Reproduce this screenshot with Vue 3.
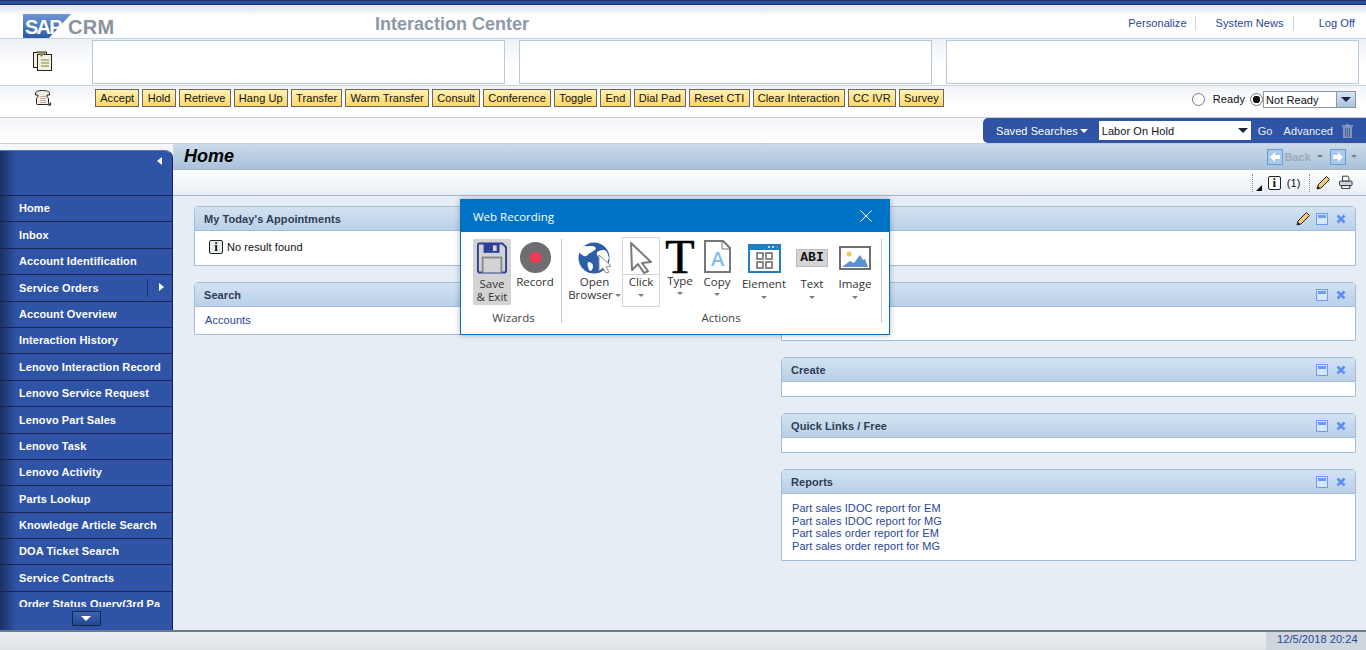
<script setup>
const actions = ['Accept', 'Hold', 'Retrieve', 'Hang Up', 'Transfer', 'Warm Transfer', 'Consult', 'Conference', 'Toggle', 'End', 'Dial Pad', 'Reset CTI', 'Clear Interaction', 'CC IVR', 'Survey']

const navItems = ['Home', 'Inbox', 'Account Identification', 'Service Orders', 'Account Overview', 'Interaction History', 'Lenovo Interaction Record', 'Lenovo Service Request', 'Lenovo Part Sales', 'Lenovo Task', 'Lenovo Activity', 'Parts Lookup', 'Knowledge Article Search', 'DOA Ticket Search', 'Service Contracts', 'Order Status Query(3rd Pa']

const reports = ['Part sales IDOC report for EM', 'Part sales IDOC report for MG', 'Part sales order report for EM', 'Part sales order report for MG']
</script>

<template>
  <div class="page">
    <div class="top-stripe"></div>

    <header class="brand-row">
      <div class="logo">
        <svg class="logo-flag" width="48" height="24" viewBox="0 0 48 24">
          <defs>
            <linearGradient id="sapBlue" x1="0" y1="0" x2="0" y2="1">
              <stop offset="0" stop-color="#6f97d6" />
              <stop offset="1" stop-color="#2a5aa8" />
            </linearGradient>
          </defs>
          <polygon points="0,0 48,0 26,24 0,24" fill="url(#sapBlue)" />
        </svg>
        <span class="logo-sap">SAP</span>
        <span class="logo-crm">CRM</span>
      </div>
      <div class="app-title">Interaction Center</div>
      <nav class="top-links">
        <a>Personalize</a>
        <a>System News</a>
        <a>Log Off</a>
      </nav>
    </header>

    <section class="info-row">
      <div class="info-icon">
        <svg width="20" height="20" viewBox="0 0 20 20">
          <rect x="0.500" y="1.500" width="13" height="15" fill="#f2f1df" stroke="#222" />
          <rect x="4.500" y="3.500" width="14" height="16" fill="#f2f1df" stroke="#222" />
          <polygon points="3,0 14,0 8.500,6" fill="#8d8a5c" />
          <path d="M8 9h8M8 12h8M8 15h8" stroke="#a9a77c" stroke-width="1.400" />
        </svg>
      </div>
      <div class="info-boxes">
        <div class="info-box"></div>
        <div class="info-box"></div>
        <div class="info-box"></div>
      </div>
    </section>

    <section class="cti-row">
      <div class="cti-phone">
        <svg width="17" height="16" viewBox="0 0 17 16">
          <path d="M0.500 5V3c0-1.500 3-2.500 7-2.500s7 1 7 2.500v2h-2.500v1.500l1.500 2v5a1 1 0 0 1-1 1h-10a1 1 0 0 1-1-1v-5l1.500-2V5z" fill="#efece2" stroke="#222" />
          <path d="M5.500 6.500h5M5.500 8.500h5M5.500 10.500h5M5.500 12.500h5" stroke="#b56a6a" stroke-dasharray="1 1" />
          <path d="M12.500 15.500l3.500-3.500v3.500z" fill="#222" />
        </svg>
      </div>
      <div class="cti-buttons">
        <button v-for="a in actions" :key="a" class="cti-btn">{{ a }}</button>
      </div>
      <div class="ready-group">
        <span class="radio"></span>
        <span class="ready-label">Ready</span>
        <span class="radio on"></span>
        <div class="ready-select">
          <span class="ready-value">Not Ready</span>
          <span class="ready-arrow"><i class="caret dark"></i></span>
        </div>
      </div>
    </section>

    <section class="search-row">
      <div class="saved-bar">
        <span class="saved-label">Saved Searches</span>
        <i class="caret white small"></i>
        <div class="saved-input">Labor On Hold<i class="caret dark"></i></div>
        <span class="saved-link go">Go</span>
        <span class="saved-link">Advanced</span>
        <svg class="trash" width="11" height="14" viewBox="0 0 11 14">
          <path d="M0 2h11M4 1h3" stroke="#8fa3c6" stroke-width="1.500" />
          <path d="M1 3h9v11H1z" fill="#8093b8" />
          <path d="M3.500 4v9M5.500 4v9M7.500 4v9" stroke="#4a639c" />
        </svg>
      </div>
    </section>

    <div class="main">
      <aside class="sidebar">
        <div class="side-top"><i class="tri-left"></i></div>
        <ul class="side-list">
          <li v-for="item in navItems" :key="item" class="side-item">
            <span>{{ item }}</span>
            <template v-if="item === 'Service Orders'">
              <em class="side-sep"></em>
              <i class="tri-right"></i>
            </template>
          </li>
        </ul>
        <div class="side-bottom">
          <div class="scroll-btn"><i class="caret white"></i></div>
        </div>
      </aside>

      <main class="work">
        <div class="title-bar">
          <h1>Home</h1>
          <div class="history">
            <span class="hist-icon">
              <svg width="14" height="14" viewBox="0 0 14 14"><path d="M2 7l5-5v3h5v4H7v3z" fill="#fff" /></svg>
            </span>
            <span class="back-text">Back</span>
            <i class="caret grey tiny back-caret"></i>
            <span class="hist-icon fwd">
              <svg width="14" height="14" viewBox="0 0 14 14"><path d="M12 7L7 2v3H2v4h5v3z" fill="#fff" /></svg>
            </span>
            <i class="caret grey tiny"></i>
          </div>
        </div>

        <div class="tool-bar">
          <span class="dots"></span>
          <i class="corner-tri"></i>
          <span class="info-glyph">i</span>
          <span class="count">(1)</span>
          <span class="dots second"></span>
          <svg class="pencil" width="15" height="15" viewBox="0 0 15 15">
            <path d="M1 14l1-4 8.500-8.500 3 3L5 13z" fill="#f4c77b" stroke="#222" />
            <path d="M1 14l1-3 2 2z" fill="#222" />
          </svg>
          <svg class="printer" width="15" height="15" viewBox="0 0 15 15">
            <path d="M4 0.500h6l1 2v3.500H4z" fill="#fff" stroke="#222" />
            <rect x="0.500" y="6" width="14" height="5" rx="1" fill="#c8d3de" stroke="#222" />
            <rect x="3" y="11" width="9" height="3" fill="#fff" stroke="#222" />
          </svg>
        </div>

        <div class="content">
          <div class="col">
            <div class="panel appt">
              <div class="panel-head">My Today's Appointments</div>
              <div class="panel-body no-result">
                <span class="info-glyph pale">i</span>
                <span>No result found</span>
              </div>
            </div>
            <div class="panel search">
              <div class="panel-head">Search</div>
              <div class="panel-body"><a class="link">Accounts</a></div>
            </div>
          </div>

          <div class="col">
            <div class="panel r-first">
              <div class="panel-head">
                <span></span>
                <div class="head-icons">
                  <svg class="pencil" width="15" height="15" viewBox="0 0 15 15">
                    <path d="M1 14l1-4 8.500-8.500 3 3L5 13z" fill="#f4c77b" stroke="#222" />
                    <path d="M1 14l1-3 2 2z" fill="#222" />
                  </svg>
                  <span class="min-btn"></span>
                  <svg class="close-btn" width="10" height="10" viewBox="0 0 10 10"><path d="M1.500 1.500l7 7M8.500 1.500l-7 7" stroke="#5f8ff0" stroke-width="2.600" /></svg>
                </div>
              </div>
              <div class="panel-body"></div>
            </div>
            <div class="panel r-second">
              <div class="panel-head">
                <span></span>
                <div class="head-icons">
                  <span class="min-btn"></span>
                  <svg class="close-btn" width="10" height="10" viewBox="0 0 10 10"><path d="M1.500 1.500l7 7M8.500 1.500l-7 7" stroke="#5f8ff0" stroke-width="2.600" /></svg>
                </div>
              </div>
              <div class="panel-body"></div>
            </div>
            <div class="panel r-small">
              <div class="panel-head">
                <span>Create</span>
                <div class="head-icons">
                  <span class="min-btn"></span>
                  <svg class="close-btn" width="10" height="10" viewBox="0 0 10 10"><path d="M1.500 1.500l7 7M8.500 1.500l-7 7" stroke="#5f8ff0" stroke-width="2.600" /></svg>
                </div>
              </div>
              <div class="panel-body"></div>
            </div>
            <div class="panel r-small">
              <div class="panel-head">
                <span>Quick Links / Free</span>
                <div class="head-icons">
                  <span class="min-btn"></span>
                  <svg class="close-btn" width="10" height="10" viewBox="0 0 10 10"><path d="M1.500 1.500l7 7M8.500 1.500l-7 7" stroke="#5f8ff0" stroke-width="2.600" /></svg>
                </div>
              </div>
              <div class="panel-body"></div>
            </div>
            <div class="panel r-reports">
              <div class="panel-head">
                <span>Reports</span>
                <div class="head-icons">
                  <span class="min-btn"></span>
                  <svg class="close-btn" width="10" height="10" viewBox="0 0 10 10"><path d="M1.500 1.500l7 7M8.500 1.500l-7 7" stroke="#5f8ff0" stroke-width="2.600" /></svg>
                </div>
              </div>
              <div class="panel-body report-list">
                <a v-for="r in reports" :key="r" class="link">{{ r }}</a>
              </div>
            </div>
          </div>
        </div>
      </main>
    </div>

    <footer class="status-bar">
      <div class="status-time">12/5/2018 20:24</div>
    </footer>

    <div class="recorder">
      <div class="rec-head">
        <span>Web Recording</span>
        <svg width="12" height="12" viewBox="0 0 12 12"><path d="M0.500 0.500l11 11M11.500 0.500l-11 11" stroke="#fff" /></svg>
      </div>
      <div class="rec-body">
        <div class="rec-group wizards">
          <div class="rec-items">
            <div class="rec-item save">
              <svg width="30" height="32" viewBox="0 0 32 33">
                <path d="M2 1h25l4 4v25a2 2 0 0 1-2 2H3a2 2 0 0 1-2-2V2z" fill="#d3d3d3" stroke="#2e3f94" stroke-width="2" />
                <path d="M7 1h17v10H7z" fill="#2e3f94" />
                <rect x="17" y="3" width="4" height="6" fill="#d3d3d3" />
                <path d="M6 32V16h20v16" fill="#d3d3d3" stroke="#8b8b8b" stroke-width="2" />
              </svg>
              <span class="rec-label">Save<br />&amp; Exit</span>
            </div>
            <div class="rec-item record">
              <svg width="33" height="33" viewBox="0 0 34 34">
                <circle cx="17" cy="17" r="16" fill="#6d6e71" />
                <circle cx="17" cy="17" r="6" fill="#ee3b55" />
              </svg>
              <span class="rec-label">Record</span>
            </div>
          </div>
          <div class="group-name">Wizards</div>
        </div>

        <div class="rec-group actions">
          <div class="rec-items">
            <div class="rec-item open">
              <svg width="36" height="34" viewBox="0 0 36 34">
                <circle cx="17" cy="17" r="15.500" fill="#2b5ea7" />
                <path d="M8 5c4 1 7-1 10 1s-3 5-5 6-3 4-6 3-4-3-5-4c1-3 3-5 6-6zM20 11c3-2 8-3 10 0l2 6c-2 3-1 8-5 10-2-3-1-6-3-8s-5-5-4-8zM11 21c3 0 5 2 5 4s-1 5-3 5c-2-2-3-6-2-9z" fill="#fff" />
                <path d="M22 14l12 11-5 1 3 5-3 1-3-5-4 3z" fill="#fff" stroke="#8a8a8a" />
              </svg>
              <span class="rec-label">Open<br />Browser<i class="caret grey tiny inline"></i></span>
            </div>
            <div class="rec-item click">
              <div class="click-top">
                <svg width="26" height="33" viewBox="0 0 26 33">
                  <path d="M3 2l20 19-9 1 6 8-4 2-6-9-6 6z" fill="#fff" stroke="#7a7a7a" stroke-width="2" stroke-linejoin="round" />
                </svg>
              </div>
              <span class="rec-label">Click</span>
              <i class="caret grey tiny"></i>
            </div>
            <div class="rec-item type">
              <span class="big-t">T</span>
              <span class="rec-label">Type</span>
              <i class="caret grey tiny"></i>
            </div>
            <div class="rec-item copy">
              <svg width="28" height="33" viewBox="0 0 28 33">
                <path d="M2 1h18l7 7v24H2z" fill="#fff" stroke="#777" stroke-width="2" />
                <path d="M19 1v8h8" fill="none" stroke="#777" />
                <text x="14.500" y="26" text-anchor="middle" class="copy-a">A</text>
              </svg>
              <span class="rec-label">Copy</span>
              <i class="caret grey tiny"></i>
            </div>
            <div class="rec-item element">
              <svg width="33" height="30" viewBox="0 0 33 30">
                <rect x="1" y="1" width="31" height="27" fill="#fff" stroke="#1f7fc0" stroke-width="2" />
                <rect x="0" y="0" width="33" height="6" fill="#1f7fc0" />
                <circle cx="21" cy="3" r="1" fill="#fff" /><circle cx="25" cy="3" r="1" fill="#fff" /><circle cx="29" cy="3" r="1" fill="#ee5566" />
                <path d="M9 9h6v6H9zM18 9h6v6h-6zM9 18h6v6H9zM18 18h6v6h-6z" fill="#fff" stroke="#666" stroke-width="1.500" />
              </svg>
              <span class="rec-label">Element</span>
              <i class="caret grey tiny"></i>
            </div>
            <div class="rec-item text">
              <div class="abi">ABI</div>
              <span class="rec-label">Text</span>
              <i class="caret grey tiny"></i>
            </div>
            <div class="rec-item image">
              <svg width="32" height="24" viewBox="0 0 32 24">
                <rect x="1" y="1" width="30" height="22" fill="#fff" stroke="#6f6f6f" stroke-width="2" />
                <circle cx="10" cy="8" r="2.500" fill="#f2c94c" />
                <path d="M3 21l8-6 4 2 6-8 3 5 2-1 3 8z" fill="#5f8fcf" />
              </svg>
              <span class="rec-label">Image</span>
              <i class="caret grey tiny"></i>
            </div>
          </div>
          <div class="group-name">Actions</div>
        </div>
      </div>
    </div>
  </div>
</template>

<style>
html, body {
  margin: 0;
  overflow: hidden;
}
</style>

<style scoped>
.page {
  position: relative;
  width: 1366px;
  height: 650px;
  overflow: hidden;
  display: flex;
  flex-direction: column;
  font-family: "Liberation Sans", Arial, sans-serif;
  font-size: 11px;
  letter-spacing: 0.07px;
  color: #111;
  background: #f4f6fa;
}

.top-stripe {
  height: 5px;
  flex: none;
  box-sizing: border-box;
  background: #2c50a0;
  border-top: 1px solid #1c2f66;
  border-bottom: 1px solid #1c2f66;
}

/* header */
.brand-row {
  height: 34px;
  flex: none;
  position: relative;
  display: flex;
  align-items: center;
  box-sizing: border-box;
  padding-top: 6px;
  border-bottom: 1px solid #c9d3de;
  background: linear-gradient(#dde3ec, #ffffff 35%);
}
.logo {
  position: absolute;
  left: 23px;
  top: 9px;
  width: 95px;
  height: 24px;
}
.logo-flag {
  display: block;
}
.logo-sap {
  position: absolute;
  left: 2px;
  top: 3px;
  font-size: 20px;
  line-height: 20px;
  font-weight: bold;
  letter-spacing: -1.800px;
  color: #fff;
}
.logo-crm {
  position: absolute;
  left: 45px;
  top: 3px;
  font-size: 20px;
  line-height: 20px;
  font-weight: bold;
  letter-spacing: 0.300px;
  color: #8a929c;
}
.app-title {
  margin-left: 375px;
  font-size: 18px;
  letter-spacing: 0;
  font-weight: bold;
  color: #8d99a8;
}
.top-links {
  margin-left: auto;
  display: flex;
  padding-right: 11px;
  margin-bottom: 4px;
}
.top-links a {
  color: #274698;
  padding: 1px 9px 1px 20px;
  border-right: 1px solid #cfd6de;
}
.top-links a:first-child {
  padding-left: 0;
  padding-right: 8px;
}
.top-links a:last-child {
  border-right: 0;
  padding-left: 25px;
  padding-right: 0;
}

.info-row {
  height: 47px;
  flex: none;
  display: flex;
  box-sizing: border-box;
  padding: 1px 7px 1px 0;
  border-bottom: 1px solid #c9d3de;
  background: linear-gradient(#eef1f6, #ffffff 60%);
}
.info-icon {
  width: 92px;
  padding: 11px 0 0 33px;
  box-sizing: border-box;
}
.info-boxes {
  flex: 1;
  display: grid;
  grid-template-columns: repeat(3, 1fr);
  column-gap: 14px;
}
.info-box {
  background: #fff;
  border: 1px solid #b4cbe0;
}

.cti-row {
  height: 32px;
  flex: none;
  display: flex;
  box-sizing: border-box;
  padding: 3px 10px 0 0;
  border-bottom: 1px solid #c9ced6;
  background: linear-gradient(#f0f3f8, #ffffff 60%);
}
.cti-phone {
  width: 95px;
  padding: 1px 0 0 35px;
  box-sizing: border-box;
}
.cti-buttons {
  display: flex;
  gap: 3px;
  height: 18px;
}
.cti-btn {
  padding: 0 4.200px;
  height: 18px;
  border: 1px solid #666;
  background: linear-gradient(#fff2b0, #fdd66a);
  font-family: inherit;
  font-size: 11px;
  letter-spacing: inherit;
  color: #111;
}
.ready-group {
  margin-left: auto;
  display: flex;
  align-items: center;
  height: 18px;
  margin-top: 1px;
}
.radio {
  width: 13px;
  height: 13px;
  box-sizing: border-box;
  border: 1px solid #777;
  border-radius: 50%;
  background: #fff;
}
.radio.on {
  background: radial-gradient(circle, #111 0 3.500px, #fff 4px);
}
.ready-label {
  margin: 0 5px 0 8px;
}
.ready-select {
  display: flex;
  height: 17px;
  width: 93px;
  box-sizing: border-box;
  border: 1px solid #8a97a8;
  background: #fff;
}
.ready-value {
  flex: 1;
  padding-left: 2px;
  line-height: 16px;
}
.ready-arrow {
  width: 18px;
  display: flex;
  align-items: center;
  justify-content: center;
  background: linear-gradient(#d8e4f0, #a9c2dc);
  border-left: 1px solid #8a97a8;
}

.caret {
  display: inline-block;
  width: 0;
  height: 0;
  border-left: 5px solid transparent;
  border-right: 5px solid transparent;
  border-top: 5px solid #111;
}
.caret.small {
  border-left-width: 4px;
  border-right-width: 4px;
  border-top-width: 4px;
}
.caret.tiny {
  border-left-width: 3.500px;
  border-right-width: 3.500px;
  border-top-width: 3.500px;
}
.caret.white {
  border-top-color: #fff;
}
.caret.grey {
  border-top-color: #7a7f87;
}
.caret.dark {
  border-top-color: #17233f;
}
.caret.inline {
  margin-left: 2px;
  vertical-align: 2px;
}

.search-row {
  height: 26px;
  flex: none;
  display: flex;
  justify-content: flex-end;
  box-sizing: border-box;
  border-bottom: 1px solid #c9ced6;
  background: linear-gradient(#f3f5f9, #ffffff);
}
.saved-bar {
  width: 383px;
  box-sizing: border-box;
  padding-left: 13px;
  display: flex;
  align-items: center;
  background: #2f54a5;
  border-radius: 5px 0 0 5px;
  color: #fff;
}
.saved-label {
  margin-right: 2px;
}
.saved-input {
  width: 152px;
  height: 19px;
  box-sizing: border-box;
  margin-left: 11px;
  padding: 0 3px;
  display: flex;
  align-items: center;
  justify-content: space-between;
  background: #fff;
  color: #111;
}
.saved-link {
  color: #e8eef8;
  margin-left: 11px;
}
.saved-link.go {
  margin-left: 7px;
}
.trash {
  margin-left: 9px;
}

/* main area */
.main {
  flex: 1;
  min-height: 0;
  display: flex;
}
.sidebar {
  width: 173px;
  flex: none;
  margin-top: 6px;
  box-sizing: border-box;
  display: flex;
  flex-direction: column;
  border-right: 1px solid #16264f;
  border-top: 1px solid #5a78bc;
  border-radius: 0 8px 0 0;
  color: #fff;
  background: linear-gradient(90deg, #1c2f66, #2f54a5 16px);
}
.side-top {
  height: 44px;
  flex: none;
  position: relative;
}
.tri-left {
  position: absolute;
  left: 157px;
  top: 6px;
  border-top: 4px solid transparent;
  border-bottom: 4px solid transparent;
  border-right: 5px solid #fff;
}
.side-list {
  margin: 0;
  padding: 0;
  list-style: none;
  height: 412px;
  flex: none;
  overflow: hidden;
}
.side-item {
  height: 26.400px;
  box-sizing: border-box;
  padding: 6.400px 0 0 19px;
  display: flex;
  position: relative;
  border-top: 1px solid #16264f;
  font-weight: bold;
  white-space: nowrap;
  letter-spacing: 0.100px;
}
.side-sep {
  position: absolute;
  left: 147px;
  top: 4px;
  height: 18px;
  border-left: 1px solid #1c3372;
}
.tri-right {
  position: absolute;
  left: 159px;
  top: 8px;
  border-top: 4px solid transparent;
  border-bottom: 4px solid transparent;
  border-left: 5px solid #fff;
}
.side-bottom {
  flex: 1;
  display: flex;
  justify-content: center;
  padding-top: 4px;
}
.scroll-btn {
  width: 29px;
  height: 15px;
  box-sizing: border-box;
  display: flex;
  align-items: center;
  justify-content: center;
  background: linear-gradient(#3f64b4, #24468f);
  border: 1px solid #16264f;
}

.work {
  flex: 1;
  min-width: 0;
  display: flex;
  flex-direction: column;
  background: #e6edf5;
}
.title-bar {
  height: 26px;
  flex: none;
  display: flex;
  justify-content: space-between;
  box-sizing: border-box;
  padding: 0 9px 0 11px;
  background: linear-gradient(#cbdbea, #a9c2d9);
  border-bottom: 1px solid #a5b5c8;
}
.title-bar h1 {
  margin: 0;
  font-size: 18px;
  line-height: 24px;
  letter-spacing: 0;
  font-weight: bold;
  font-style: italic;
  color: #000;
}
.history {
  display: flex;
  align-items: center;
}
.hist-icon {
  width: 14px;
  height: 14px;
  box-sizing: border-box;
  display: flex;
  background: #a8c8ec;
  outline: 1px solid #6d9bd8;
}
.hist-icon.fwd {
  margin: 0 6px 0 8px;
}
.back-text {
  margin-left: 2px;
  font-weight: bold;
  color: #9fa9b5;
}
.back-caret {
  margin-left: 6px;
}
.tool-bar {
  height: 26px;
  flex: none;
  display: flex;
  align-items: center;
  box-sizing: border-box;
  padding: 0 13px 0 1079px;
  background: linear-gradient(#ffffff, #e8eef5);
  border-bottom: 1px solid #a5b5c8;
}
.dots {
  width: 0;
  height: 18px;
  border-left: 1px dotted #8a8f98;
}
.dots.second {
  margin-left: 9px;
}
.corner-tri {
  width: 0;
  height: 0;
  margin: 10px 0 0 3px;
  border-left: 6px solid transparent;
  border-bottom: 6px solid #111;
}
.info-glyph {
  width: 14px;
  height: 14px;
  box-sizing: border-box;
  margin-left: 6px;
  display: inline-flex;
  align-items: center;
  justify-content: center;
  border: 1px solid #222;
  border-radius: 2px;
  background: #fff;
  font-family: "Liberation Serif", serif;
  font-size: 13px;
  font-weight: bold;
  color: #111;
}
.info-glyph.pale {
  margin-left: 0;
  background: #e6f0ea;
}
.count {
  margin-left: 6px;
}
.pencil {
  flex: none;
}
.tool-bar .pencil {
  margin-left: 6px;
}
.head-icons .pencil {
  margin-right: -2px;
}
.printer {
  margin-left: 8px;
}

.content {
  flex: 1;
  display: grid;
  grid-template-columns: 573px 575px;
  column-gap: 14px;
  padding: 10px 0 0 21px;
  align-content: start;
}
.col {
  display: flex;
  flex-direction: column;
}
.panel {
  display: flex;
  flex-direction: column;
  box-sizing: border-box;
  border: 1px solid #a3bdd9;
  border-radius: 4px 4px 0 0;
  background: #fff;
  margin-bottom: 16px;
}
.panel-head {
  height: 24px;
  flex: none;
  display: flex;
  align-items: center;
  justify-content: space-between;
  box-sizing: border-box;
  padding: 0 9px;
  background: linear-gradient(#d2e2f2, #bad1e8);
  border-bottom: 1px solid #a3bdd9;
  font-weight: bold;
  color: #2d3d55;
}
.panel-body {
  flex: 1;
}
.appt, .r-first {
  height: 60px;
}
.search {
  height: 53px;
}
.r-second {
  height: 59px;
}
.r-small {
  height: 40px;
}
.r-reports {
  height: 92px;
}
.no-result {
  padding: 9px 14px;
  display: flex;
  gap: 4px;
  align-items: center;
  align-self: stretch;
  flex: none;
}
.search .panel-body {
  padding: 7px 10px;
}
.link {
  color: #274698;
}
.report-list {
  display: flex;
  flex-direction: column;
  padding: 8px 10px;
  line-height: 12.700px;
}
.head-icons {
  display: flex;
  align-items: center;
  gap: 7px;
}
.min-btn {
  width: 12px;
  height: 12px;
  box-sizing: border-box;
  border: 1px solid #6a9bff;
  background: linear-gradient(#6a9bff, #6a9bff) no-repeat 1px 1px / 8px 3px #d8e6f6;
}
.close-btn {
  flex: none;
  margin-left: 1px;
}

.status-bar {
  height: 20px;
  flex: none;
  display: flex;
  justify-content: flex-end;
  box-sizing: border-box;
  border-top: 2px solid #6a7a92;
  background: linear-gradient(#eceef0, #dfe3e6);
}
.status-time {
  width: 100px;
  box-sizing: border-box;
  padding: 1px 0 0 11px;
  background: #ced5dc;
  font-size: 11px;
  color: #274698;
}

/* recorder window */
.recorder {
  position: absolute;
  left: 460px;
  top: 199px;
  width: 430px;
  height: 136px;
  box-sizing: border-box;
  display: flex;
  flex-direction: column;
  border: 1px solid #0072c6;
  background: #fff;
  box-shadow: 0 0 6px rgba(0, 0, 0, 0.28);
  font-family: "Open Sans", "Noto Sans", sans-serif;
  font-size: 11.500px;
  letter-spacing: 0;
  color: #333;
}
.rec-head {
  height: 32px;
  flex: none;
  box-sizing: border-box;
  padding: 0 17px 0 12px;
  display: flex;
  align-items: center;
  justify-content: space-between;
  background: #0072c6;
  color: #fff;
}
.rec-body {
  flex: 1;
  display: flex;
  padding: 7px 0 0 12px;
}
.rec-group {
  height: 84px;
  display: flex;
  flex-direction: column;
  box-sizing: border-box;
  border-right: 1px solid #c8c8c8;
}
.wizards {
  width: 89px;
}
.wizards .group-name {
  padding-right: 7px;
}
.actions {
  width: 320px;
  padding-left: 5px;
}
.actions .group-name {
  padding-right: 6px;
}
.rec-items {
  display: flex;
  flex: 1;
}
.group-name {
  height: 15px;
  margin-bottom: -3px;
  text-align: center;
  line-height: 14px;
  color: #444;
}
.rec-item {
  display: flex;
  flex-direction: column;
  align-items: center;
  box-sizing: border-box;
  line-height: 13px;
  text-align: center;
}
.rec-label {
  display: block;
  white-space: nowrap;
}
.save {
  width: 38px;
  height: 66px;
  padding-top: 3px;
  background: #d3d3d3;
}
.save .rec-label {
  margin-top: 3px;
}
.record {
  width: 48px;
  height: 66px;
  padding-top: 2px;
}
.record .rec-label {
  margin-top: 1px;
}
.open {
  width: 55px;
  padding-top: 2px;
}
.click {
  width: 38px;
  height: 70px;
  margin-top: -2px;
  border: 1px solid #d4d4d4;
}
.click-top {
  width: 100%;
  height: 37px;
  padding-top: 3px;
  box-sizing: border-box;
  border-bottom: 1px solid #d4d4d4;
}
.click .caret {
  margin-top: 6px;
}
.type {
  width: 38px;
  margin-left: 1px;
}
.big-t {
  height: 35px;
  font-family: "Liberation Serif", serif;
  font-size: 48px;
  line-height: 35px;
  -webkit-text-stroke: 0.600px #000;
  color: #000;
}
.type .caret, .copy .caret {
  margin-top: 5px;
}
.copy {
  width: 36px;
  padding-top: 1px;
}
.copy-a {
  font-family: "Open Sans", sans-serif;
  font-size: 20px;
  font-weight: 600;
  fill: #7fbde8;
}
.copy .rec-label {
  margin-top: 2px;
}
.element {
  width: 58px;
  padding-top: 5px;
}
.element .rec-label {
  margin-top: 3px;
}
.element .caret, .text .caret, .image .caret {
  margin-top: 6px;
}
.text {
  width: 38px;
  padding-top: 10px;
}
.abi {
  width: 32px;
  height: 18px;
  margin-bottom: 10px;
  box-sizing: border-box;
  background: #d5d5d5;
  border: 1px solid #bbb;
  font-family: "Liberation Mono", monospace;
  font-size: 13px;
  line-height: 16px;
  font-weight: bold;
  color: #111;
}
.image {
  width: 48px;
  padding-top: 7px;
}
.image .rec-label {
  margin-top: 7px;
}
</style>
